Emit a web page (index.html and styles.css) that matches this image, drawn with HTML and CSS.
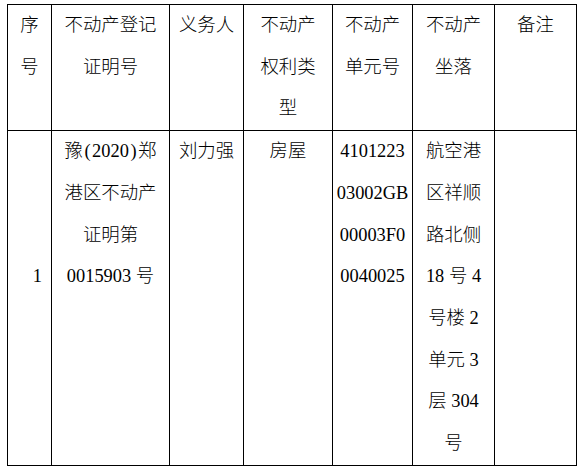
FILE: index.html
```html
<!DOCTYPE html>
<html lang="zh-CN">
<head>
<meta charset="utf-8">
<title>不动产登记</title>
<link rel="stylesheet" href="styles.css">
</head>
<body>
<table class="reg">
  <colgroup>
    <col class="c1"><col class="c2"><col class="c3"><col class="c4"><col class="c5"><col class="c6"><col class="c7">
  </colgroup>
  <tr class="head">
    <td>序<br>号</td>
    <td>不动产登记<br>证明号</td>
    <td>义务人</td>
    <td>不动产<br>权利类<br>型</td>
    <td>不动产<br>单元号</td>
    <td>不动产<br>坐落</td>
    <td>备注</td>
  </tr>
  <tr class="data">
    <td class="num">1</td>
    <td>豫<span class="paren">(</span>2020<span class="paren">)</span>郑<br>港区不动产<br>证明第<br>0015903 号</td>
    <td>刘力强</td>
    <td>房屋</td>
    <td>4101223<br>03002GB<br>00003F0<br>0040025</td>
    <td>航空港<br>区祥顺<br>路北侧<br>18 号 4<br>号楼 2<br>单元 3<br>层 304<br>号</td>
    <td></td>
  </tr>
</table>
</body>
</html>
```

FILE: styles.css
```css
html, body {
  margin: 0;
  padding: 0;
  background: #fff;
}
body {
  padding: 4px 0 0 7px;
  font-family: "Liberation Serif", "Noto Sans CJK SC", serif;
  font-size: 18.4px;
  font-weight: 300;
  color: #000;
}
.reg {
  border-collapse: collapse;
  table-layout: fixed;
  width: 569px;
}
.c1 { width: 44px; }
.c2 { width: 118px; }
.c3 { width: 74px; }
.c4 { width: 89px; }
.c5 { width: 80px; }
.c6 { width: 82px; }
.c7 { width: 82px; }
.reg td {
  border: 1px solid #000;
  padding: 0;
  text-align: center;
  vertical-align: top;
  line-height: 41.7px;
  white-space: nowrap;
}
.reg td.num {
  text-align: right;
  padding: 125px 9px 0 0;
}
.paren {
  padding: 0 1.5px;
}
```
